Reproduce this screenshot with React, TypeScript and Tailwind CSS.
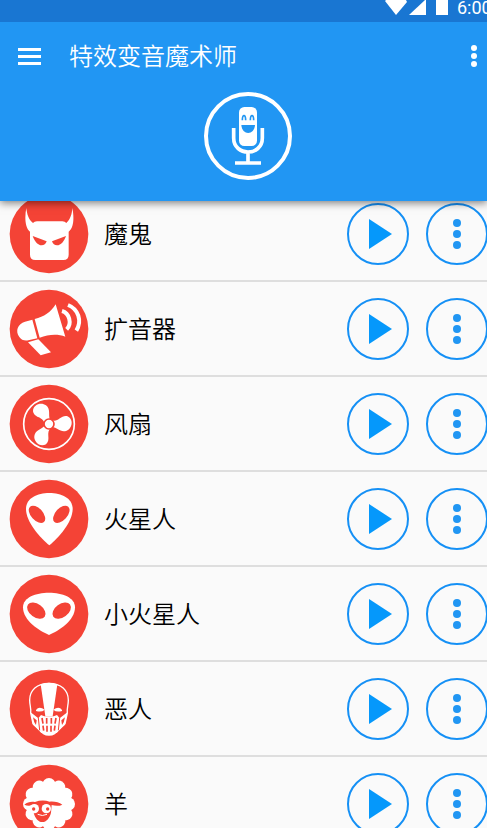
import React from 'react';

const Devil = () => (
  <>
    <path
      fill="#fff"
      d="M52 42 C54 60 58 76 72 87 Q76 82 84 82 H160 Q168 82 172 87 C184 76 189 60 190 42 C195 66 196 100 179 113 V182 Q179 198 163 198 H79 Q63 198 63 182 V113 C47 100 47 66 52 42 Z"
    />
    <path fill="#f44336" d="M71 126 L113 142 Q109 154 98 154 C86 154 77 142 71 126 Z" />
    <path fill="#f44336" d="M171 126 L129 142 Q133 154 144 154 C156 154 165 142 171 126 Z" />
  </>
);

const Megaphone = () => (
  <>
    <path fill="#fff" d="M77 90 C106 82 124 72 140 46 L169 143 C146 134 118 136 92 146 Z" />
    <path fill="#fff" d="M70 92 L48 98 C26 104 18 126 31 144 C37 153 46 156 58 154 L85 148 Z" />
    <path fill="#fff" d="M57 160 L88 151 L126 190 L95 199 Z" />
    <g fill="none" stroke="#fff" strokeWidth="12">
      <path d="M159 66 C181 72 190 104 173 121" />
      <path d="M177 48 C208 60 220 96 202 125" />
    </g>
  </>
);

const Fan = () => (
  <>
    <circle cx="120" cy="120" r="76" fill="none" stroke="#fff" strokeWidth="5" />
    {[0, 120, 240].map((angle) => (
      <path
        key={angle}
        transform={`rotate(${angle} 120 120)`}
        fill="#fff"
        d="M107 121 C104 96 76 104 72 82 C72 60 98 54 111 64 C126 76 117 92 123 108 Z"
      />
    ))}
    <circle cx="120" cy="120" r="15" fill="#fff" stroke="#f44336" strokeWidth="5" />
  </>
);

const Alien = () => (
  <>
    <path
      fill="#fff"
      d="M121 199 C95 178 51 130 51 90 C51 57 85 42 121 42 C157 42 191 57 191 90 C191 130 147 178 121 199 Z"
    />
    <ellipse cx="84" cy="106" rx="31" ry="18" transform="rotate(48 84 106)" fill="#f44336" />
    <ellipse cx="157" cy="106" rx="31" ry="18" transform="rotate(-48 157 106)" fill="#f44336" />
  </>
);

const LittleAlien = () => (
  <>
    <path
      fill="#fff"
      d="M120 183 C90 170 42 140 42 100 C42 70 80 56 120 56 C160 56 198 70 198 100 C198 140 150 170 120 183 Z"
    />
    <ellipse cx="82" cy="110" rx="31" ry="20" transform="rotate(36 82 110)" fill="#f44336" />
    <ellipse cx="158" cy="110" rx="31" ry="20" transform="rotate(-36 158 110)" fill="#f44336" />
  </>
);

const Villain = () => (
  <>
    <path
      fill="none"
      stroke="#fff"
      strokeWidth="4"
      d="M120 43 C84 43 62 64 62 94 C62 108 67 118 65 132 L72 164 L98 190 H142 L168 164 L175 132 C173 118 178 108 178 94 C178 64 156 43 120 43 Z"
    />
    <path fill="#fff" d="M95 46 Q120 36 145 46 L131 142 H109 Z" />
    <path fill="#fff" d="M81 123 Q90 110 107 122 Q98 131 81 126 Z" />
    <path fill="#fff" d="M159 123 Q150 110 133 122 Q142 131 159 126 Z" />
    <path
      fill="#fff"
      d="M65 130 L88 148 L96 138 L106 142 H134 L144 138 L152 148 L175 130 L168 167 L150 182 Q140 200 120 200 Q100 200 90 182 L72 167 Z"
    />
    <g fill="none" stroke="#f44336" strokeWidth="5">
      <path d="M99 147 L102 164" />
      <path d="M113 147 V164" />
      <path d="M127 147 V164" />
      <path d="M141 147 L138 164" />
      <path d="M102 170 L104 185" />
      <path d="M114 170 V188" />
      <path d="M126 170 V188" />
      <path d="M138 170 L136 185" />
    </g>
    <path fill="none" stroke="#f44336" strokeWidth="3" d="M88 147 L92 184 M152 147 L148 184" />
    <path fill="#f44336" d="M72 145 L83 154 L81 168 Q74 160 72 145 Z" />
    <path fill="#f44336" d="M168 145 L157 154 L159 168 Q166 160 168 145 Z" />
  </>
);

const Sheep = () => (
  <>
    <g fill="#fff">
      <circle cx="120" cy="120" r="66" />
      {[0, 30, 60, 90, 120, 150, 180, 210, 240, 270, 300, 330].map((angle) => (
        <circle key={angle} cx="120" cy="62" r="20" transform={`rotate(${angle} 120 120)`} />
      ))}
    </g>
    <path
      fill="#f44336"
      d="M46 122 C56 113 68 112 78 114 Q100 106 122 113 C136 112 150 114 160 122 C150 127 138 126 128 123 L126 146 C122 162 112 174 100 174 C88 174 78 162 74 146 L72 123 C62 126 54 126 46 122 Z"
    />
    <circle cx="76" cy="134" r="14" fill="#fff" />
    <circle cx="112" cy="134" r="14" fill="#fff" />
    <circle cx="74" cy="135" r="5" fill="#f44336" />
    <circle cx="116" cy="135" r="5" fill="#f44336" />
    <path d="M86 151 Q100 158 114 151" fill="none" stroke="#fff" strokeWidth="3" />
  </>
);

const effects = [
  { name: '魔鬼', Icon: Devil },
  { name: '扩音器', Icon: Megaphone },
  { name: '风扇', Icon: Fan },
  { name: '火星人', Icon: Alien },
  { name: '小火星人', Icon: LittleAlien },
  { name: '恶人', Icon: Villain },
  { name: '羊', Icon: Sheep },
];

const StatusBar = () => (
  <div className="relative z-20 flex h-[22px] shrink-0 justify-end overflow-hidden bg-[#1976d2] text-white">
    <svg className="h-4 w-16 shrink-0" viewBox="0 0 64 16" fill="currentColor" aria-hidden="true">
      <path d="M0 1 L1 0 H21 L22 2 L11 15 Z" />
      <path d="M24 15 L40 0 H41 V15 Z" />
      <path d="M51 0 H63 V15 H51 Z" />
    </svg>
    <span className="ml-2 w-[30px] shrink-0 font-[Roboto] text-lg leading-4 whitespace-nowrap">6:00</span>
  </div>
);

const Header = () => (
  <header className="relative z-10 shrink-0 bg-[#2196f3] pb-[21px] text-white shadow-[0_2px_8px_rgba(0,0,0,0.5)]">
    <div className="flex h-[68px] items-center pl-[18px]">
      <button type="button" aria-label="Menu" className="flex w-[23px] flex-col gap-1">
        <span className="h-[3px] w-full bg-white" />
        <span className="h-[3px] w-full bg-white" />
        <span className="h-[3px] w-full bg-white" />
      </button>
      <h1 className="ml-7 flex-1 pb-[2px] text-2xl font-[350]">特效变音魔术师</h1>
      <button type="button" aria-label="More options" className="flex flex-col gap-[2px] pr-[10px]">
        <span className="size-[6px] rounded-full bg-white" />
        <span className="size-[6px] rounded-full bg-white" />
        <span className="size-[6px] rounded-full bg-white" />
      </button>
    </div>
    <div className="flex justify-center pt-[2px] pl-2">
      <button type="button" aria-label="Record" className="size-[88px] rounded-full border-4 border-white">
        <svg viewBox="0 0 240 240" className="size-20" aria-hidden="true">
          <rect x="93" y="33" width="54" height="117" rx="16" fill="#fff" />
          <g fill="none" stroke="#2196f3" strokeWidth="5">
            <path d="M103 73 C103 54 113 54 113 73" />
            <path d="M127 73 C127 54 137 54 137 73" />
          </g>
          <path d="M100 87 H141 C139 119 102 119 100 87 Z" fill="#2196f3" />
          <path
            fill="none"
            stroke="#fff"
            strokeWidth="11"
            d="M77 96 V126 C77 182 163 182 163 126 V96 M120 170 V201 M81 201 H159"
          />
        </svg>
      </button>
    </div>
  </header>
);

const App = () => {
  return (
    <div className="flex h-screen flex-col overflow-hidden bg-[#fafafa] font-['Noto_Sans_CJK_SC',sans-serif]">
      <StatusBar />
      <Header />
      <main className="min-h-0 flex-1 overflow-hidden">
        {/* list is scrolled slightly under the header */}
        <ul className="-mt-[14px]">
          {effects.map(({ name, Icon }) => (
            <li key={name} className="flex h-[95px] items-center border-b-2 border-[#dedede] pl-[9px]">
              <svg viewBox="0 0 240 240" className="size-20 shrink-0" aria-hidden="true">
                <circle cx="120" cy="120" r="118" fill="#f44336" />
                <Icon />
              </svg>
              <span className="ml-[15px] flex-1 pb-[2px] text-2xl font-[350] text-black">{name}</span>
              <div className="-mr-px flex shrink-0 gap-[17px]">
                <button
                  type="button"
                  aria-label={`播放 ${name}`}
                  className="size-[62px] rounded-full border-2 border-[#1590f5]"
                >
                  <svg viewBox="0 0 58 58" className="size-full" aria-hidden="true">
                    <path d="M20 14 L43 29 L20 44 Z" fill="#0598fb" />
                  </svg>
                </button>
                <button
                  type="button"
                  aria-label={`更多 ${name}`}
                  className="flex size-[62px] flex-col items-center justify-center gap-[3px] rounded-full border-2 border-[#1590f5]"
                >
                  <span className="size-2 rounded-full bg-[#2196f3]" />
                  <span className="size-2 rounded-full bg-[#2196f3]" />
                  <span className="size-2 rounded-full bg-[#2196f3]" />
                </button>
              </div>
            </li>
          ))}
        </ul>
      </main>
    </div>
  );
};

export default App;
